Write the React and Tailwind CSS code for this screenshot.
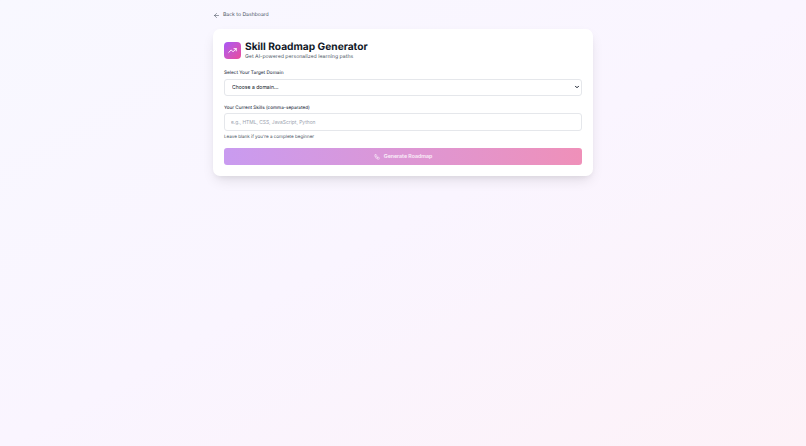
import { ArrowLeft, TrendingUp, Workflow, ChevronDown } from 'lucide-react';

export default function App() {
    return (
        <div className="font-['Inter',sans-serif] [text-rendering:geometricPrecision] min-h-screen bg-gradient-to-br from-[#f8f8ff] via-[#faf5ff] to-[#fdf2f8]">
            <div className="w-[380px] mx-auto pt-[11px]">
                <a className="flex items-center gap-[3px] h-[9px] text-[5.1px] leading-[11px] text-[#4b5563] mb-[9px]">
                    <ArrowLeft className="w-[7px] h-[7px] text-[#4b5563]" />
                    <span>Back to Dashboard</span>
                </a>

                <div className="bg-white rounded-[7px] shadow-[0_6px_14px_-3px_rgba(0,0,0,0.12),0_3px_6px_-3px_rgba(0,0,0,0.08)] px-[11px] pt-[11px] pb-[11px]">
                    <div className="flex items-center gap-[4px] mb-[8px]">
                        <div className="w-[17px] h-[17px] rounded-[4px] bg-gradient-to-br from-[#a855f7] to-[#ec4899] flex items-center justify-center">
                            <TrendingUp strokeWidth={2.5} className="w-[9px] h-[9px] text-white" />
                        </div>
                        <div>
                            <h1 className="text-[10.2px] leading-[14px] font-bold text-[#111827]">Skill Roadmap Generator</h1>
                            <p className="text-[5.2px] leading-[7px] text-[#4b5563]">Get AI-powered personalized learning paths</p>
                        </div>
                    </div>

                    <label className="block text-[4.7px] leading-[8px] font-medium text-[#374151] mb-[2px]">Select Your Target Domain</label>
                    <div className="relative mb-[9px]">
                        <select className="block w-full h-[17px] px-[7px] appearance-none text-[5.1px] text-[#111827] bg-white border border-[#e5e7eb] rounded-[3px]">
                            <option>Choose a domain...</option>
                        </select>
                        <ChevronDown strokeWidth={4} className="absolute right-[2px] top-[5px] w-[6px] h-[6px] text-[#111827]" />
                    </div>

                    <label className="block text-[4.6px] leading-[8px] font-medium text-[#374151]">Your Current Skills (comma-separated)</label>
                    <input
                        className="block w-full h-[18px] px-[6px] text-[4.9px] bg-white border border-[#e5e7eb] rounded-[3px] placeholder:text-[#9ca3af]"
                        placeholder="e.g., HTML, CSS, JavaScript, Python"
                    />
                    <p className="text-[4.55px] leading-[8px] text-[#4b5563] mt-[3px] mb-[6px]">Leave blank if you're a complete beginner</p>

                    <button className="w-full h-[17px] rounded-[3px] bg-gradient-to-r from-[#c99bf0] to-[#ef90b9] flex items-center justify-center gap-[4px] text-white/85 text-[5.25px] font-semibold">
                        <Workflow className="w-[6px] h-[6px]" />
                        Generate Roadmap
                    </button>
                </div>
            </div>
        </div>
    );
}
